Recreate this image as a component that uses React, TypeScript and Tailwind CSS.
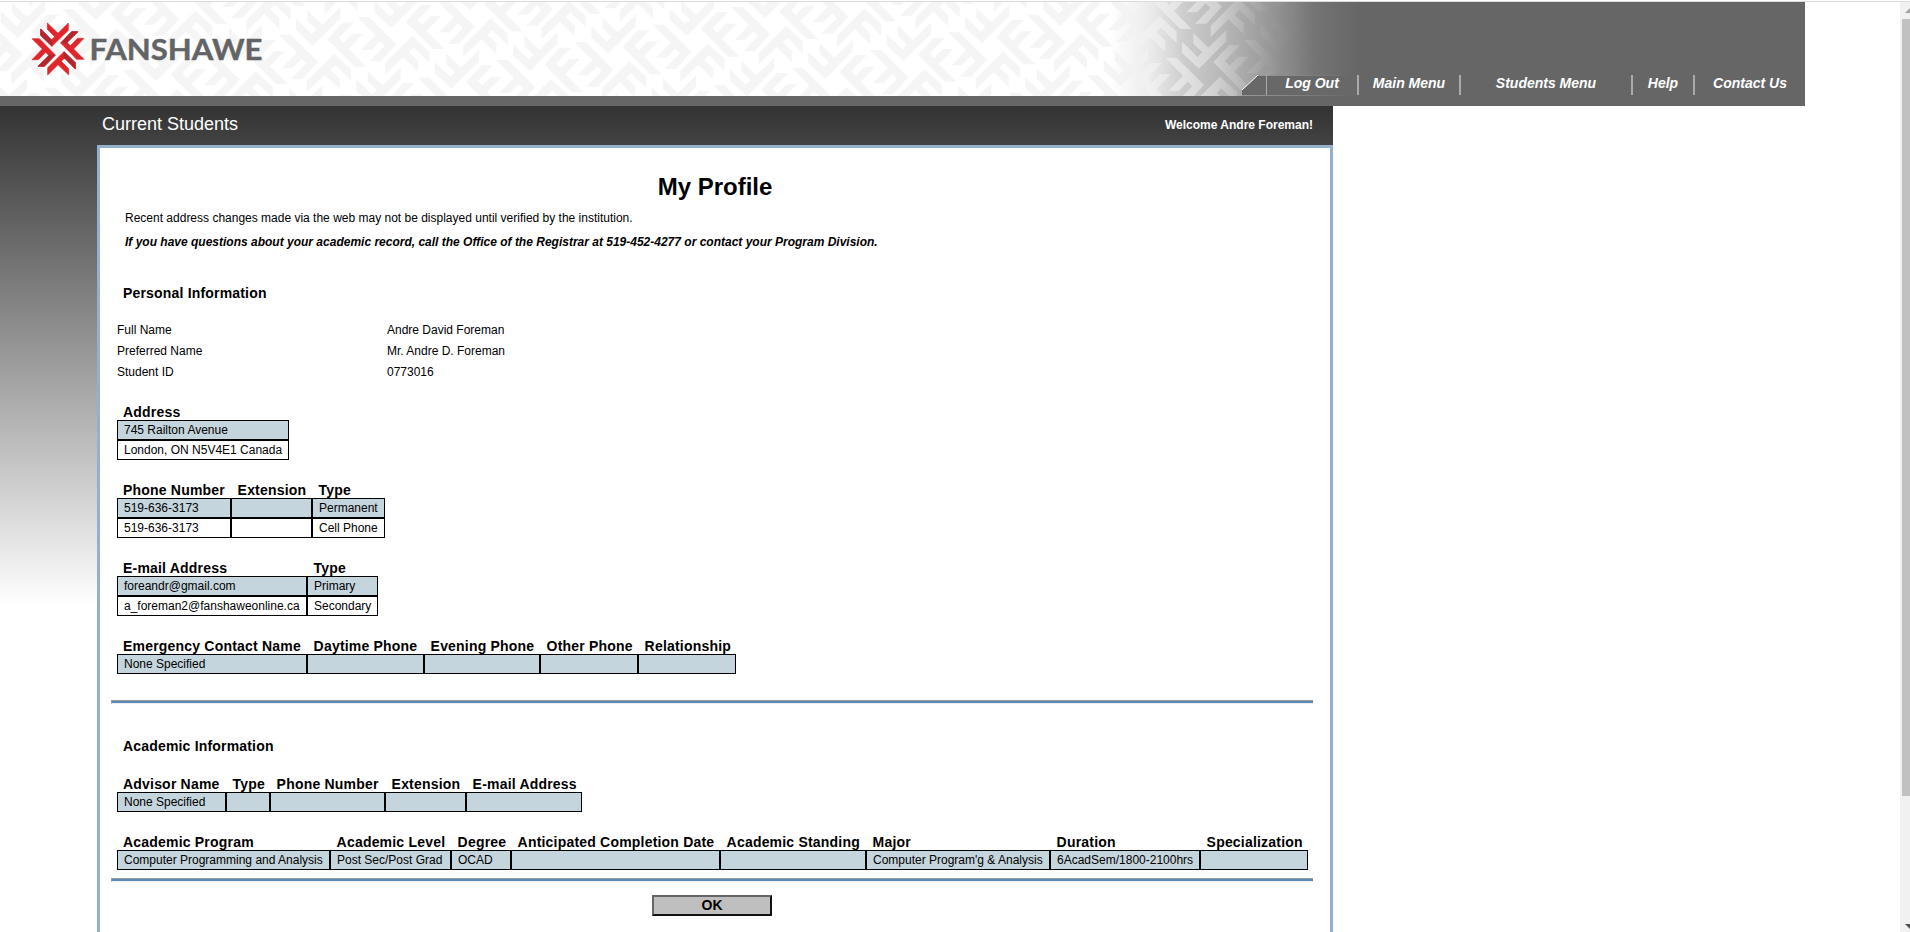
import React from "react";

const F_SHAPES = [
  "303,88 385,170 419,170 366,116 410,71 378,71 352,98 338,84 384,37 350,37",
  "510,103 428,21 394,21 447,75 403,120 435,120 461,93 475,107 429,154 463,154",
  "323,131 241,213 241,247 295,194 340,238 340,206 313,180 327,166 374,212 374,178",
  "260,107 342,25 342,-9 288,44 243,0 243,32 270,58 256,72 209,26 209,60",
];

const TILES: { x: number; y: number }[] = [];
for (let i = -14; i < 14; i++) {
  for (let j = -6; j < 8; j++) {
    const x = i * 235 - j * 54;
    const y = -i * 53 + j * 235;
    if (x > -2400 && x < 2200 && y > -340 && y < 420) TILES.push({ x, y });
  }
}

function HeaderArt() {
  return (
    <svg width="1805" height="94" viewBox="0 2 1805 94" className="block">
      <defs>
        <linearGradient id="base" gradientUnits="userSpaceOnUse" x1="1110" y1="0" x2="1360" y2="0">
          <stop offset="0" stopColor="#ffffff" />
          <stop offset="0.16" stopColor="#ebebeb" />
          <stop offset="0.3" stopColor="#cccccc" />
          <stop offset="0.5" stopColor="#b0b0b0" />
          <stop offset="0.65" stopColor="#959595" />
          <stop offset="0.82" stopColor="#747474" />
          <stop offset="1" stopColor="#666666" />
        </linearGradient>
        <linearGradient id="leaf" gradientUnits="userSpaceOnUse" x1="1110" y1="0" x2="1360" y2="0">
          <stop offset="0" stopColor="#f5f5f5" />
          <stop offset="0.16" stopColor="#f0f0f0" />
          <stop offset="0.3" stopColor="#e2e2e2" />
          <stop offset="0.42" stopColor="#d2d2d2" />
          <stop offset="0.54" stopColor="#b4b4b4" />
          <stop offset="0.66" stopColor="#959595" />
          <stop offset="0.82" stopColor="#747474" />
          <stop offset="1" stopColor="#666666" />
        </linearGradient>
        <g id="motif" fill="#fff">
          {F_SHAPES.map((p) => (
            <polygon key={p} points={p} />
          ))}
        </g>
        <mask id="leaves" maskUnits="userSpaceOnUse" x="0" y="0" width="1805" height="100">
          <g transform="translate(600 0) scale(0.33333)">
            {TILES.map((t) => (
              <use key={`${t.x},${t.y}`} href="#motif" x={t.x} y={t.y} />
            ))}
          </g>
        </mask>
        <linearGradient id="tabLine" x1="0" x2="1" y1="0" y2="0">
          <stop offset="0" stopColor="#999999" />
          <stop offset="1" stopColor="#666666" />
        </linearGradient>
        <g id="flake">
          <polygon
            fill="#e0262b"
            stroke="#e0262b"
            strokeWidth="2"
            points="31,-78 31,-56 -18,-8 -52,-41 -52,-60 -20,-27 -10,-37 -32,-59 -32,-78 0,-47"
          />
          <polygon fill="#b3272d" stroke="#b3272d" strokeWidth="2" points="-52,-60 -52,-41 -18,-8 -18,-26" />
        </g>
      </defs>
      <rect x="0" y="2" width="1805" height="94" fill="url(#base)" />
      <rect x="0" y="2" width="1805" height="94" fill="url(#leaf)" mask="url(#leaves)" />
      <g transform="translate(58 49) scale(0.33333)">
        <use href="#flake" />
        <use href="#flake" transform="rotate(90)" />
        <use href="#flake" transform="rotate(180)" />
        <use href="#flake" transform="rotate(270)" />
      </g>
      <text
        x="89.5"
        y="59.6"
        textLength="173"
        lengthAdjust="spacingAndGlyphs"
        fontSize="29"
        fontWeight="700"
        fill="#636466"
        stroke="#636466"
        strokeWidth="0.4"
        fontFamily="Lato, sans-serif"
      >
        FANSHAWE
      </text>
      <polygon points="1242,90 1258,75 1359,75 1359,95 1242,95" fill="#686868" />
      <rect x="1258" y="75" width="98" height="1" fill="url(#tabLine)" />
      <rect x="1242" y="95" width="114" height="1" fill="url(#tabLine)" />
      <line x1="1242" y1="90" x2="1258" y2="75" stroke="#fff" strokeWidth="1" />
      <rect x="1266" y="75" width="1" height="20" fill="#aaaaaa" />
    </svg>
  );
}

function NavItem({ label, width, last }: { label: string; width: string; last?: boolean }) {
  return (
    <a
      className={`flex h-5 items-start justify-center text-[14px] leading-[17px] font-bold text-white italic ${width} ${
        last ? "" : "border-r-2 border-[#aaaaaa]"
      }`}
    >
      {label}
    </a>
  );
}

function DataTable({ heads, rows, widths, className = "" }: { heads: string[]; rows: string[][]; widths: number[]; className?: string }) {
  return (
    <table className={`table-fixed border-separate border-spacing-0 ${className}`} style={{ width: widths.reduce((a, b) => a + b, 0) }}>
      <colgroup>
        {widths.map((w, i) => (
          <col key={i} style={{ width: w }} />
        ))}
      </colgroup>
      <thead>
        <tr>
          {heads.map((h) => (
            <th
              key={h}
              className="h-4 p-0 pl-[6.6px] text-left text-[14px] leading-4 font-bold tracking-[0.2px] whitespace-nowrap first:pl-1.5"
            >
              {h}
            </th>
          ))}
        </tr>
      </thead>
      <tbody>
        {rows.map((row, r) => (
          <tr key={r} className={r % 2 === 0 ? "bg-[#c5d5dd]" : "bg-white"}>
            {row.map((c, i) => (
              <td key={i} className="h-5 border border-black p-0 pl-1.5 text-[12px] leading-[18px] whitespace-nowrap">
                {c}
              </td>
            ))}
          </tr>
        ))}
      </tbody>
    </table>
  );
}

function Rule({ className = "" }: { className?: string }) {
  return (
    <div className={`-ml-1.5 h-1 w-[1202px] border-t border-b border-l border-t-[#9a9a9a] border-b-[#eeeeee] border-l-[#9a9a9a] bg-[#5b8ab8] ${className}`} />
  );
}

const INFO = [
  ["Full Name", "Andre David Foreman"],
  ["Preferred Name", "Mr. Andre D. Foreman"],
  ["Student ID", "0773016"],
];

export default function App() {
  return (
    <div className="flex h-[932px] w-[1910px] flex-col overflow-hidden bg-white pt-px font-['Liberation_Sans',Arial,sans-serif] text-black">
      <div className="h-px shrink-0 bg-[#d9dcdb]" />
      <div className="flex min-h-0 flex-1">
        <div className="flex w-[1900px] flex-col">
          <header className="relative h-[104px] w-[1805px] shrink-0 bg-[#666666]">
            <HeaderArt />
            <nav className="absolute top-[73px] right-0 flex">
              <NavItem label="Log Out" width="w-[92px]" />
              <NavItem label="Main Menu" width="w-[102px]" />
              <NavItem label="Students Menu" width="w-[172px]" />
              <NavItem label="Help" width="w-[62px]" />
              <NavItem label="Contact Us" width="w-[110px]" last />
            </nav>
          </header>
          <div className="flex min-h-0 w-[1333px] flex-1 flex-col bg-[linear-gradient(to_bottom,#333333_0px,#ffffff_500px)]">
            <div className="flex h-[39px] shrink-0 items-center justify-between pr-[20px] pl-[102px] text-white">
              <span className="-mt-[3px] text-[18px] leading-[20px]">Current Students</span>
              <span className="-mt-px text-[12px] leading-4 font-bold">Welcome Andre Foreman!</span>
            </div>
            <main className="ml-[97px] flex min-h-0 flex-1 flex-col border-x-[3px] border-t-[3px] border-[#94b0cf] bg-white pl-[17px]">
              <h1 className="mt-[25px] -ml-[17px] h-7 text-center text-[24px] leading-7 font-bold">My Profile</h1>
              <p className="mt-[9px] ml-2 text-[12px] leading-4">
                Recent address changes made via the web may not be displayed until verified by the institution.
              </p>
              <p className="mt-2 ml-2 text-[12px] leading-4 font-bold italic">
                If you have questions about your academic record, call the Office of the Registrar at 519-452-4277 or contact your Program Division.
              </p>
              <h2 className="mt-[35px] ml-1.5 text-[14px] leading-4 font-bold tracking-[0.18px]">Personal Information</h2>
              <dl className="mt-[19px]">
                {INFO.map(([k, v]) => (
                  <div key={k} className="flex h-[21px] text-[12px] leading-[21px]">
                    <dt className="w-[270px]">{k}</dt>
                    <dd>{v}</dd>
                  </div>
                ))}
              </dl>
              <DataTable className="mt-[21px]" heads={["Address"]} rows={[["745 Railton Avenue"], ["London, ON N5V4E1 Canada"]]} widths={[172]} />
              <DataTable
                className="mt-[22px]"
                heads={["Phone Number", "Extension", "Type"]}
                rows={[
                  ["519-636-3173", "", "Permanent"],
                  ["519-636-3173", "", "Cell Phone"],
                ]}
                widths={[114, 81, 73]}
              />
              <DataTable
                className="mt-[22px]"
                heads={["E-mail Address", "Type"]}
                rows={[
                  ["foreandr@gmail.com", "Primary"],
                  ["a_foreman2@fanshaweonline.ca", "Secondary"],
                ]}
                widths={[190, 71]}
              />
              <DataTable
                className="mt-[22px]"
                heads={["Emergency Contact Name", "Daytime Phone", "Evening Phone", "Other Phone", "Relationship"]}
                rows={[["None Specified", "", "", "", ""]]}
                widths={[190, 117, 116, 98, 98]}
              />
              <Rule className="mt-[26px] shrink-0" />
              <h2 className="mt-[34px] ml-1.5 text-[14px] leading-4 font-bold tracking-[0.18px]">Academic Information</h2>
              <DataTable
                className="mt-[22px]"
                heads={["Advisor Name", "Type", "Phone Number", "Extension", "E-mail Address"]}
                rows={[["None Specified", "", "", "", ""]]}
                widths={[109, 44, 115, 81, 116]}
              />
              <DataTable
                className="mt-[22px]"
                heads={["Academic Program", "Academic Level", "Degree", "Anticipated Completion Date", "Academic Standing", "Major", "Duration", "Specialization"]}
                rows={[["Computer Programming and Analysis", "Post Sec/Post Grad", "OCAD", "", "", "Computer Program'g & Analysis", "6AcadSem/1800-2100hrs", ""]]}
                widths={[213, 121, 60, 209, 146, 184, 150, 108]}
              />
              <Rule className="mt-2 shrink-0" />
              <button className="mt-[13px] ml-[535px] h-[21px] w-[120px] shrink-0 border-2 border-t-[#666666] border-r-[#111111] border-b-[#111111] border-l-[#666666] bg-[#bfbfbf] text-[14px] leading-[17px] font-bold">
                OK
              </button>
            </main>
          </div>
        </div>
        <div className="flex w-[10px] flex-col overflow-hidden bg-[#f1f1f1] pl-0.5">
          <svg width="8" height="17" className="block shrink-0">
            <path d="M3 11 L8 6 L8 11 Z" fill="#a3a3a3" />
          </svg>
          <div className="h-[777px] bg-[#c1c1c1]" />
          <svg width="8" height="17" className="mt-auto block shrink-0">
            <path d="M3 9 L8 9 L8 14 Z" fill="#505050" />
          </svg>
        </div>
      </div>
    </div>
  );
}
